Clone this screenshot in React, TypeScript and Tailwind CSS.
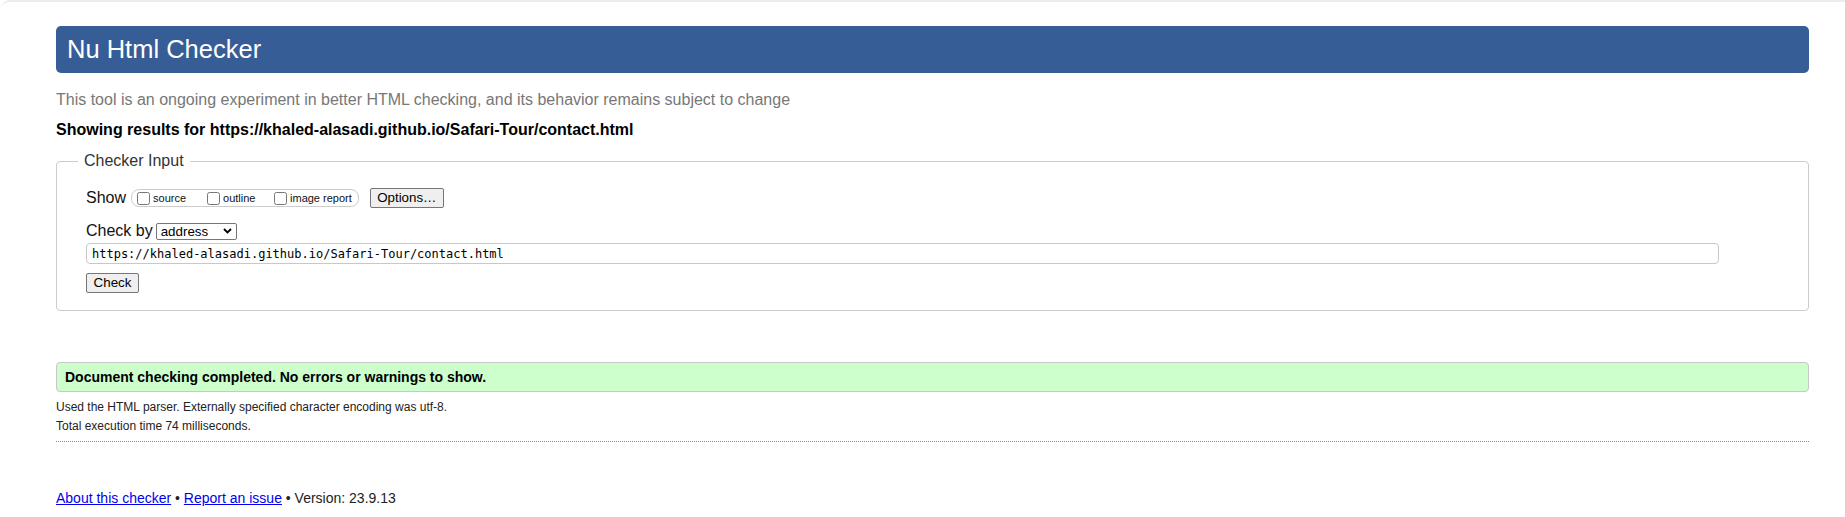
export default function App() {
  return (
    <div className="min-h-screen bg-white border-t-2 border-[#ececec] rounded-tl-[10px] font-['Liberation_Sans',Arial,sans-serif] text-[#111]">
      <div className="pl-[56px] pr-[36px] pt-[24px] pb-[12px]">
        {/* Header */}
        <h1 className="h-[47px] rounded-[5px] bg-[#365d95] text-white text-[25.5px] font-normal pl-[11px] flex items-center">
          Nu Html Checker
        </h1>
        <p className="mt-[18px] text-[16px] leading-[18px] text-[#777]">
          This tool is an ongoing experiment in better HTML checking, and its
          behavior remains subject to change
        </p>
        <p className="mt-[12px] text-[16px] leading-[18px] font-bold text-black">
          Showing results for https://khaled-alasadi.github.io/Safari-Tour/contact.html
        </p>

        {/* Checker input */}
        <fieldset className="mt-[13px] border border-[#cccccc] rounded-[4px] pl-[21px] pr-[89px] pt-[18px] pb-[17px]">
          <legend className="px-[6px] text-[16px] leading-[18px] text-[#333]">
            Checker Input
          </legend>
          <div className="pl-[8px]">
            <div className="flex items-center h-[20px]">
              <span className="text-[16px] leading-[18px]">Show</span>
              <div className="ml-[5px] flex items-center h-[18px] border border-[#cccccc] rounded-[8px] pl-[5px] pr-[6px]">
                <label className="flex items-center w-[70px]">
                  <input type="checkbox" className="m-0 w-[13px] h-[13px]" />
                  <span className="ml-[3px] text-[11px] leading-[13px]">source</span>
                </label>
                <label className="flex items-center w-[67px]">
                  <input type="checkbox" className="m-0 w-[13px] h-[13px]" />
                  <span className="ml-[3px] text-[11px] leading-[13px]">outline</span>
                </label>
                <label className="flex items-center">
                  <input type="checkbox" className="m-0 w-[13px] h-[13px]" />
                  <span className="ml-[3px] text-[11px] leading-[13px]">image report</span>
                </label>
              </div>
              <button
                type="button"
                className="ml-[11px] h-[20px] w-[74px] bg-[#efefef] border border-[#767676] rounded-[2px] text-[13.33px] leading-[16px] text-black"
              >
                Options…
              </button>
            </div>

            <div className="mt-[14px] flex items-center h-[18px]">
              <span className="text-[16px] leading-[18px]">Check by</span>
              <div className="ml-[3px] flex items-center h-[17px] w-[81px] bg-white border border-[#767676] rounded-[2px] pl-[4px] pr-[3px]">
                <select className="appearance-none flex-1 bg-transparent text-[13.33px] leading-[15px] text-black outline-none">
                  <option>address</option>
                </select>
                <svg width="9" height="6" viewBox="0 0 9 6" className="mr-[1px]">
                  <path d="M1 1 L4.5 4.5 L8 1" fill="none" stroke="#000" strokeWidth="1.8" />
                </svg>
              </div>
            </div>

            <input
              type="text"
              readOnly
              value="https://khaled-alasadi.github.io/Safari-Tour/contact.html"
              className="mt-[3px] block w-full h-[21px] border border-[#c8c8c8] rounded-[4px] pl-[5px] font-['DejaVu_Sans_Mono',monospace] text-[12px] text-black outline-none"
            />

            <button
              type="button"
              className="mt-[9px] block h-[20px] w-[53px] bg-[#efefef] border border-[#767676] rounded-[2px] text-[13.33px] leading-[16px] text-black"
            >
              Check
            </button>
          </div>
        </fieldset>

        {/* Results */}
        <div className="mt-[51px] h-[30px] flex items-center bg-[#ccffcc] border border-[#c8c8c8] rounded-[4px] pl-[8px]">
          <span className="text-[14px] leading-[16px] font-bold text-black">
            Document checking completed. No errors or warnings to show.
          </span>
        </div>
        <p className="mt-[8px] text-[12px] leading-[14px] text-[#222]">
          Used the HTML parser. Externally specified character encoding was utf-8.
        </p>
        <p className="mt-[5px] text-[12px] leading-[14px] text-[#222]">
          Total execution time 74 milliseconds.
        </p>
        <div className="mt-[8px] border-t border-dotted border-[#888]" />

        {/* Footer */}
        <p className="mt-[48px] text-[14px] leading-[16px] text-[#222]">
          <a href="#" className="text-[#0000ee] underline">About this checker</a>
          {" • "}
          <a href="#" className="text-[#0000ee] underline">Report an issue</a>
          {" • Version: 23.9.13"}
        </p>
      </div>
    </div>
  );
}
